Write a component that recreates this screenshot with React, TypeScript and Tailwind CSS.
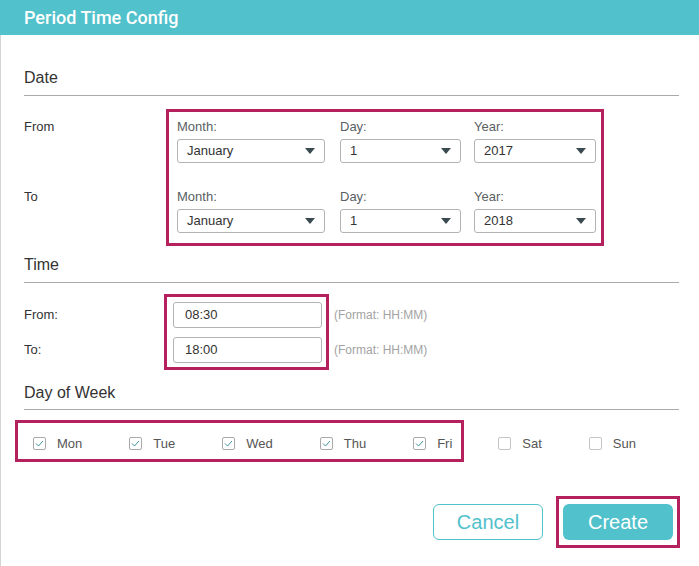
import React from 'react';

const font = { fontFamily: '"Liberation Sans", Arial, sans-serif' };

function Caret() {
  return (
    <svg width="10" height="6" viewBox="0 0 10 6" className="shrink-0">
      <polygon points="0,0 10,0 5,6" fill="#3b4950" />
    </svg>
  );
}

function Select({ value, width }: { value: string; width: string }) {
  return (
    <div className={`mt-1 flex h-6 ${width} items-center justify-between rounded-[3px] border border-[#b3b3b3] bg-white pl-[9px] pr-[9px] text-[13px] text-[#333]`}>
      <span>{value}</span>
      <Caret />
    </div>
  );
}

function Field({ label, value, width, className = '' }: { label: string; value: string; width: string; className?: string }) {
  return (
    <div className={className}>
      <div className="text-[13px] leading-[16px] text-[#5a5f63]">{label}</div>
      <Select value={value} width={width} />
    </div>
  );
}

function DateRow({ year, className = '' }: { year: string; className?: string }) {
  return (
    <div className={`flex ${className}`}>
      <Field label="Month:" value="January" width="w-[148px]" />
      <Field label="Day:" value="1" width="w-[121px]" className="ml-[15px]" />
      <Field label="Year:" value={year} width="w-[122px]" className="ml-[13px]" />
    </div>
  );
}

function SectionTitle({ title, className = '' }: { title: string; className?: string }) {
  return (
    <div className={`border-b border-[#aaaaaa] text-[16px] leading-[20px] text-[#333] ${className}`}>{title}</div>
  );
}

function Check({ label, checked, className = '' }: { label: string; checked: boolean; className?: string }) {
  return (
    <div className={`flex items-center ${className}`}>
      <div className={`flex h-[13px] w-[13px] items-center justify-center rounded-[2px] border ${checked ? 'border-[#a9a9a9]' : 'border-[#c4c4c4]'} bg-white`}>
        {checked && (
          <svg width="9" height="7" viewBox="0 0 9 7">
            <polyline points="1,3.5 3.5,6 8,1" fill="none" stroke="#3f949f" strokeWidth="1" />
          </svg>
        )}
      </div>
      <span className="ml-[11px] text-[13px] text-[#555]">{label}</span>
    </div>
  );
}

export default function App() {
  return (
    <div className="h-[566px] w-[699px] overflow-hidden bg-white" style={font}>
      {/* Header */}
      <div className="flex h-[35px] items-center bg-[#51c1cb] px-6 pb-px">
        <h1 className="text-[18px] font-medium text-white" style={{ fontFamily: 'Roboto, "Liberation Sans", sans-serif' }}>
          Period Time Config
        </h1>
      </div>

      <div className="h-[531px] border-l border-[#d4d4d4] pl-[23px] pr-5 pt-[33px]">
        {/* Date */}
        <SectionTitle title="Date" className="pb-[7px]" />
        <div className="mt-[13px] flex">
          <div className="w-[142px] pt-[10px] text-[13px] leading-[16px] text-[#333]">
            <div>From</div>
            <div className="mt-[54px]">To</div>
          </div>
          <div className="w-[438px] border-[3px] border-[#b5215d] pb-[10px] pl-[8px] pt-[7px]">
            <DateRow year="2017" />
            <DateRow year="2018" className="mt-[26px]" />
          </div>
        </div>

        {/* Time */}
        <SectionTitle title="Time" className="mt-[9px] pb-[7px]" />
        <div className="mt-[11px] flex">
          <div className="w-[140px] pt-[8px] text-[13px] text-[#333]">
            <div className="flex h-[26px] items-center">From:</div>
            <div className="mt-[9px] flex h-[26px] items-center">To:</div>
          </div>
          <div className="border-[3px] border-[#b5215d] pb-[4px] pl-[6px] pr-[4px] pt-[5px]">
            <div className="flex h-[26px] w-[149px] items-center rounded-[3px] border border-[#b3b3b3] pl-[11px] text-[13px] text-[#333]">08:30</div>
            <div className="mt-[9px] flex h-[26px] w-[149px] items-center rounded-[3px] border border-[#b3b3b3] pl-[11px] text-[13px] text-[#333]">18:00</div>
          </div>
          <div className="ml-[5px] pt-[8px] text-[12px] text-[#a3a3a3]">
            <div className="flex h-[26px] items-center">(Format: HH:MM)</div>
            <div className="mt-[9px] flex h-[26px] items-center">(Format: HH:MM)</div>
          </div>
        </div>

        {/* Day of Week */}
        <SectionTitle title="Day of Week" className="mt-[13px] pb-[6px]" />
        <div className="-ml-[9px] mt-[10px] flex items-center">
          <div className="flex h-[42px] items-center gap-[47px] border-[3px] border-[#b5215d] pl-[15px] pr-[9px] pt-[5px]">
            <Check label="Mon" checked />
            <Check label="Tue" checked />
            <Check label="Wed" checked />
            <Check label="Thu" checked />
            <Check label="Fri" checked />
          </div>
          <Check label="Sat" checked={false} className="ml-[34px] mt-[5px]" />
          <Check label="Sun" checked={false} className="ml-[47px] mt-[5px]" />
        </div>

        {/* Buttons */}
        <div className="-mr-px mt-[34px] flex items-start justify-end">
          <button className="mt-[8px] h-[36px] w-[110px] rounded-[6px] border border-[#51c1cb] bg-white text-[20px] text-[#51c1cb]">
            Cancel
          </button>
          <div className="ml-[13px] border-[3px] border-[#b5215d] px-[4px] py-[5px]">
            <button className="h-[36px] w-[110px] rounded-[6px] bg-[#51c1cb] text-[20px] text-white">Create</button>
          </div>
        </div>
      </div>
    </div>
  );
}
